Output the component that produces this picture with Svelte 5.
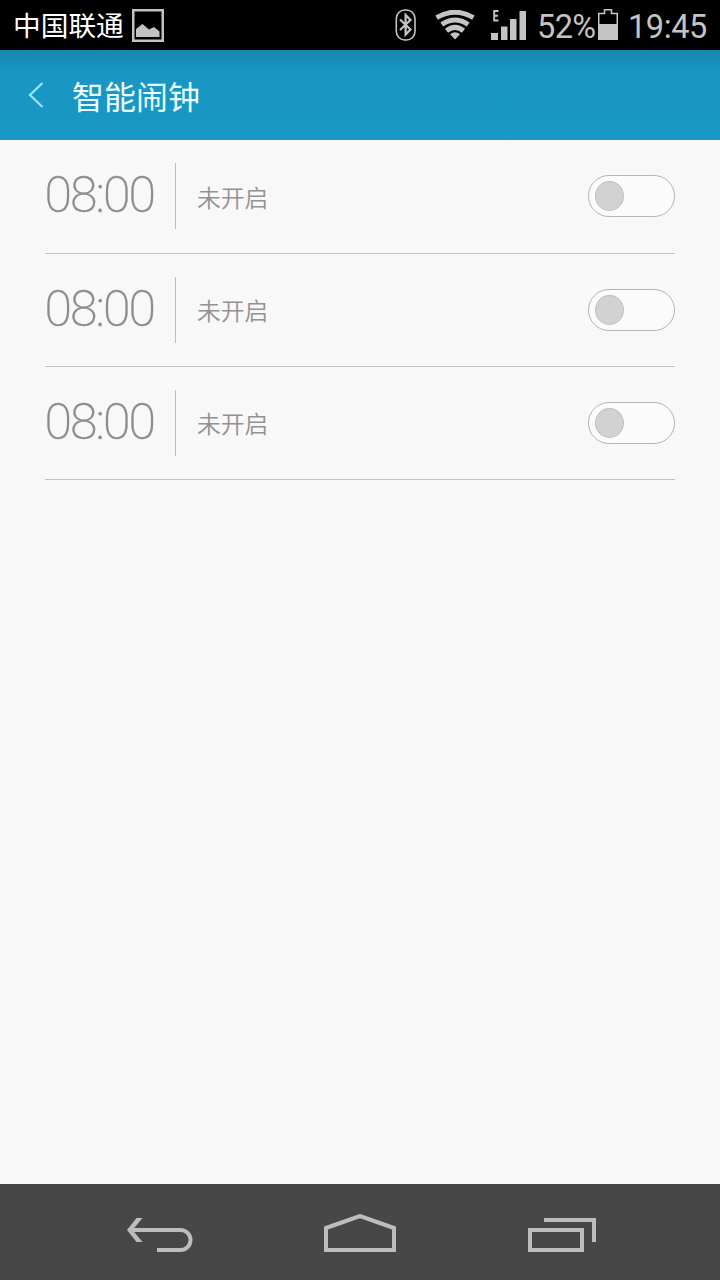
<script>

	let alarms = [
		{ id: 1, time: '08:00', on: false },
		{ id: 2, time: '08:00', on: false },
		{ id: 3, time: '08:00', on: false }
	];

	function toggle(i) {
		alarms[i].on = !alarms[i].on;
	}

</script>

<main>
	<div class="status">
		<span class="carrier">中国联通</span>
		<svg class="picture" width="32" height="33" viewBox="0 0 32 33">
			<rect x="1.250" y="1.250" width="29.500" height="30.500" fill="none" stroke="#c2c2c2" stroke-width="2.500" />
			<path d="M4 28V20L10.500 15L17 20.500L22 18L27.500 22.500V28Z" fill="#c2c2c2" />
		</svg>
		<svg class="bluetooth" width="21" height="32" viewBox="0 0 21 32">
			<rect x="1.300" y="1" width="18.700" height="30" rx="8.500" fill="none" stroke="#c4c4c4" stroke-width="1.600" />
			<path d="M5 10.500L15.500 20.500L10.600 25.500V6L15.500 11L5 21" fill="none" stroke="#c4c4c4" stroke-width="2.200" />
		</svg>
		<svg class="wifi" width="40" height="30" viewBox="0 0 40 30">
			<g fill="none" stroke="#c4c4c4" stroke-width="5">
				<path d="M1.600 7.600Q20 -3.200 38.400 7.600" />
				<path d="M6.800 14.500Q20 5.500 33.200 14.500" />
				<path d="M11.500 20.800Q20 14 28.500 20.800" />
			</g>
			<path d="M15 24.200Q20 20.500 25 24.200L20 29.500Z" fill="#c4c4c4" />
		</svg>
		<svg class="signal" width="36" height="32" viewBox="0 0 36 32">
			<path d="M7.500 2H3.200V11.500H7.500M3.200 6.700H7" fill="none" stroke="#c4c4c4" stroke-width="1.900" />
			<path d="M0 24H7V31H0ZM10 17.500H16.500V31H10ZM19 10H25.500V31H19ZM28.500 2H35V31H28.500Z" fill="#c4c4c4" />
		</svg>
		<span class="percent">52%</span>
		<svg class="battery" width="20" height="31" viewBox="0 0 20 31">
			<path d="M.75 30V4.500H6.500V.75H13.500V4.500H19.250V30Z" fill="none" stroke="#c8c8c8" stroke-width="1.500" />
			<path d="M0 15H20V31H0Z" fill="#c4c4c4" />
		</svg>
		<span class="clock">19:45</span>
	</div>

	<header>
		<svg width="16" height="28" viewBox="0 0 16 28">
			<path d="M14.500 2L2 14L14.500 26" fill="none" stroke="#9ee4fb" stroke-width="2.200" />
		</svg>
		<h1>智能闹钟</h1>
	</header>

	<ul>
		{#each alarms as alarm, i (alarm.id)}
			<li>
				<div class="time">{alarm.time}</div>
				<div class="state">{alarm.on ? '已开启' : '未开启'}</div>
				<button class="switch" class:on={alarm.on} on:click={() => toggle(i)} aria-label="闹钟开关">
					<span class="knob"></span>
				</button>
			</li>
		{/each}
	</ul>

	<nav>
		<svg width="68" height="40" viewBox="0 0 68 40">
			<path d="M4 16H54.500A10 10 0 0 1 54.500 36H31" fill="none" stroke="#bdbdbd" stroke-width="4" />
			<path d="M10.500 4H16.500L6.500 16L16.500 28H10.500L1 16Z" fill="#bdbdbd" />
		</svg>
		<svg width="74" height="40" viewBox="0 0 74 40">
			<path d="M2 14L36 2L70 14V36H2Z" fill="none" stroke="#bdbdbd" stroke-width="4" />
		</svg>
		<svg width="70" height="40" viewBox="0 0 70 40">
			<path d="M2 16H54V36H2Z" fill="none" stroke="#bdbdbd" stroke-width="4" />
			<path d="M16 6H66V28" fill="none" stroke="#bdbdbd" stroke-width="4" />
		</svg>
	</nav>
</main>

<style>
:global(body) {
	background: #f8f8f8;
}
main {
	display: flex;
	flex-direction: column;
	height: 1280px;
	width: 720px;
	overflow: hidden;
	background: #f8f8f8;
	font-family: Roboto, "Noto Sans CJK SC", sans-serif;
}
svg {
	display: block;
	flex: none;
}
.status {
	display: flex;
	height: 50px;
	flex: none;
	background: #000;
	color: #c4c4c4;
	font-size: 32.500px;
	font-weight: 400;
	line-height: 54px;
	white-space: nowrap;
}
.carrier {
	width: 119px;
	padding-left: 13px;
	font-size: 27.700px;
	font-weight: 400;
	line-height: 53px;
	color: #fff;
}
.picture {
	margin-top: 9px;
}
.bluetooth {
	margin: 9px 19px 0 231px;
}
.wifi {
	margin-top: 10px;
}
.signal {
	margin: 9px 10px 0 16px;
}
.percent {
	width: 61px;
	letter-spacing: -0.600px;
}
.battery {
	margin: 9px 10px 0 0;
}
.clock {
	letter-spacing: -0.400px;
}
header {
	display: flex;
	align-items: center;
	height: 90px;
	flex: none;
	padding-left: 28px;
	box-sizing: border-box;
	background: linear-gradient(#1887b0, #1996c3 24px, #1998c5);
}
h1 {
	margin: 6px 0 0 28px;
	font-size: 32px;
	font-weight: 400;
	line-height: 48px;
	color: #eaffff;
}
ul {
	flex: 1;
	margin: 0;
	padding: 0.400px 45px 0;
	list-style: none;
}
li {
	display: flex;
	align-items: center;
	box-sizing: border-box;
	height: 113.200px;
	border-bottom: 1px solid #c2c2c2;
}
.time {
	width: 130px;
	height: 66px;
	border-right: 1px solid #bdbdbd;
	font-size: 50px;
	font-weight: 200;
	line-height: 64px;
	letter-spacing: -2px;
	text-indent: -0.500px;
	color: #8c8c8c;
	-webkit-text-stroke: 0.300px #8c8c8c;
}
.state {
	flex: 1;
	padding: 0 0 0 21px;
	font-size: 23.800px;
	font-family: "Noto Sans CJK SC", sans-serif;
	font-weight: 350;
	color: #929292;
}
.switch {
	display: flex;
	align-items: center;
	width: 87px;
	height: 42px;
	padding: 0 6px;
	border: 1px solid #b5b5b5;
	border-radius: 21px;
	background: #fbfbfb;
	cursor: pointer;
}
.switch.on {
	justify-content: flex-end;
	background: #1998c5;
}
.knob {
	box-sizing: border-box;
	width: 29px;
	height: 30px;
	border: 1px solid #c0c0c0;
	border-radius: 50%;
	background: #d2d2d2;
}
nav {
	display: flex;
	align-items: center;
	height: 96px;
	flex: none;
	gap: 130px;
	padding: 4px 0 0 126px;
	box-sizing: border-box;
	background: #474747;
}
</style>
